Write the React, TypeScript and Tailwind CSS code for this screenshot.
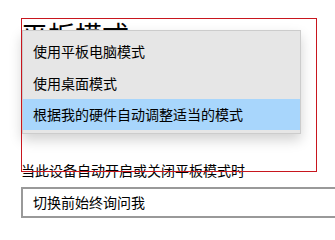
import React from "react";

const font = { fontFamily: '"Noto Sans CJK SC", "Liberation Sans", sans-serif' };

export default function App() {
  return (
    <div
      className="relative w-[335px] h-[229px] overflow-hidden bg-white text-black"
      style={font}
    >
      <div className="flex flex-col pl-[21px] pt-[17px]">
        <h1 className="text-[27px] leading-[36px] font-normal whitespace-nowrap">平板模式</h1>
        <div className="h-[107px]" />
        <p className="text-[14px] leading-[20px] whitespace-nowrap">当此设备自动开启或关闭平板模式时</p>
        <div className="mt-[7px] h-[31px] w-[330px] border-2 border-[#999999] flex items-center pl-[10px] text-[14px] whitespace-nowrap">
          切换前始终询问我
        </div>
      </div>

      <div className="absolute left-[22px] top-[30px] w-[279px] h-[104px] bg-[#e6e6e6] border border-[#cccccc] shadow-[0_6px_12px_rgba(0,0,0,0.18)] pt-[4px] flex flex-col text-[14px]">
        <div className="h-[32px] flex items-center pl-[10px] whitespace-nowrap">使用平板电脑模式</div>
        <div className="h-[32px] flex items-center pl-[10px] whitespace-nowrap">使用桌面模式</div>
        <div className="h-[31px] flex items-center pl-[10px] bg-[#a8d6fc] whitespace-nowrap">
          根据我的硬件自动调整适当的模式
        </div>
      </div>

      <div className="absolute left-[21px] top-[18px] w-[296px] h-[154px] border border-[#c8161e] pointer-events-none" />
    </div>
  );
}
